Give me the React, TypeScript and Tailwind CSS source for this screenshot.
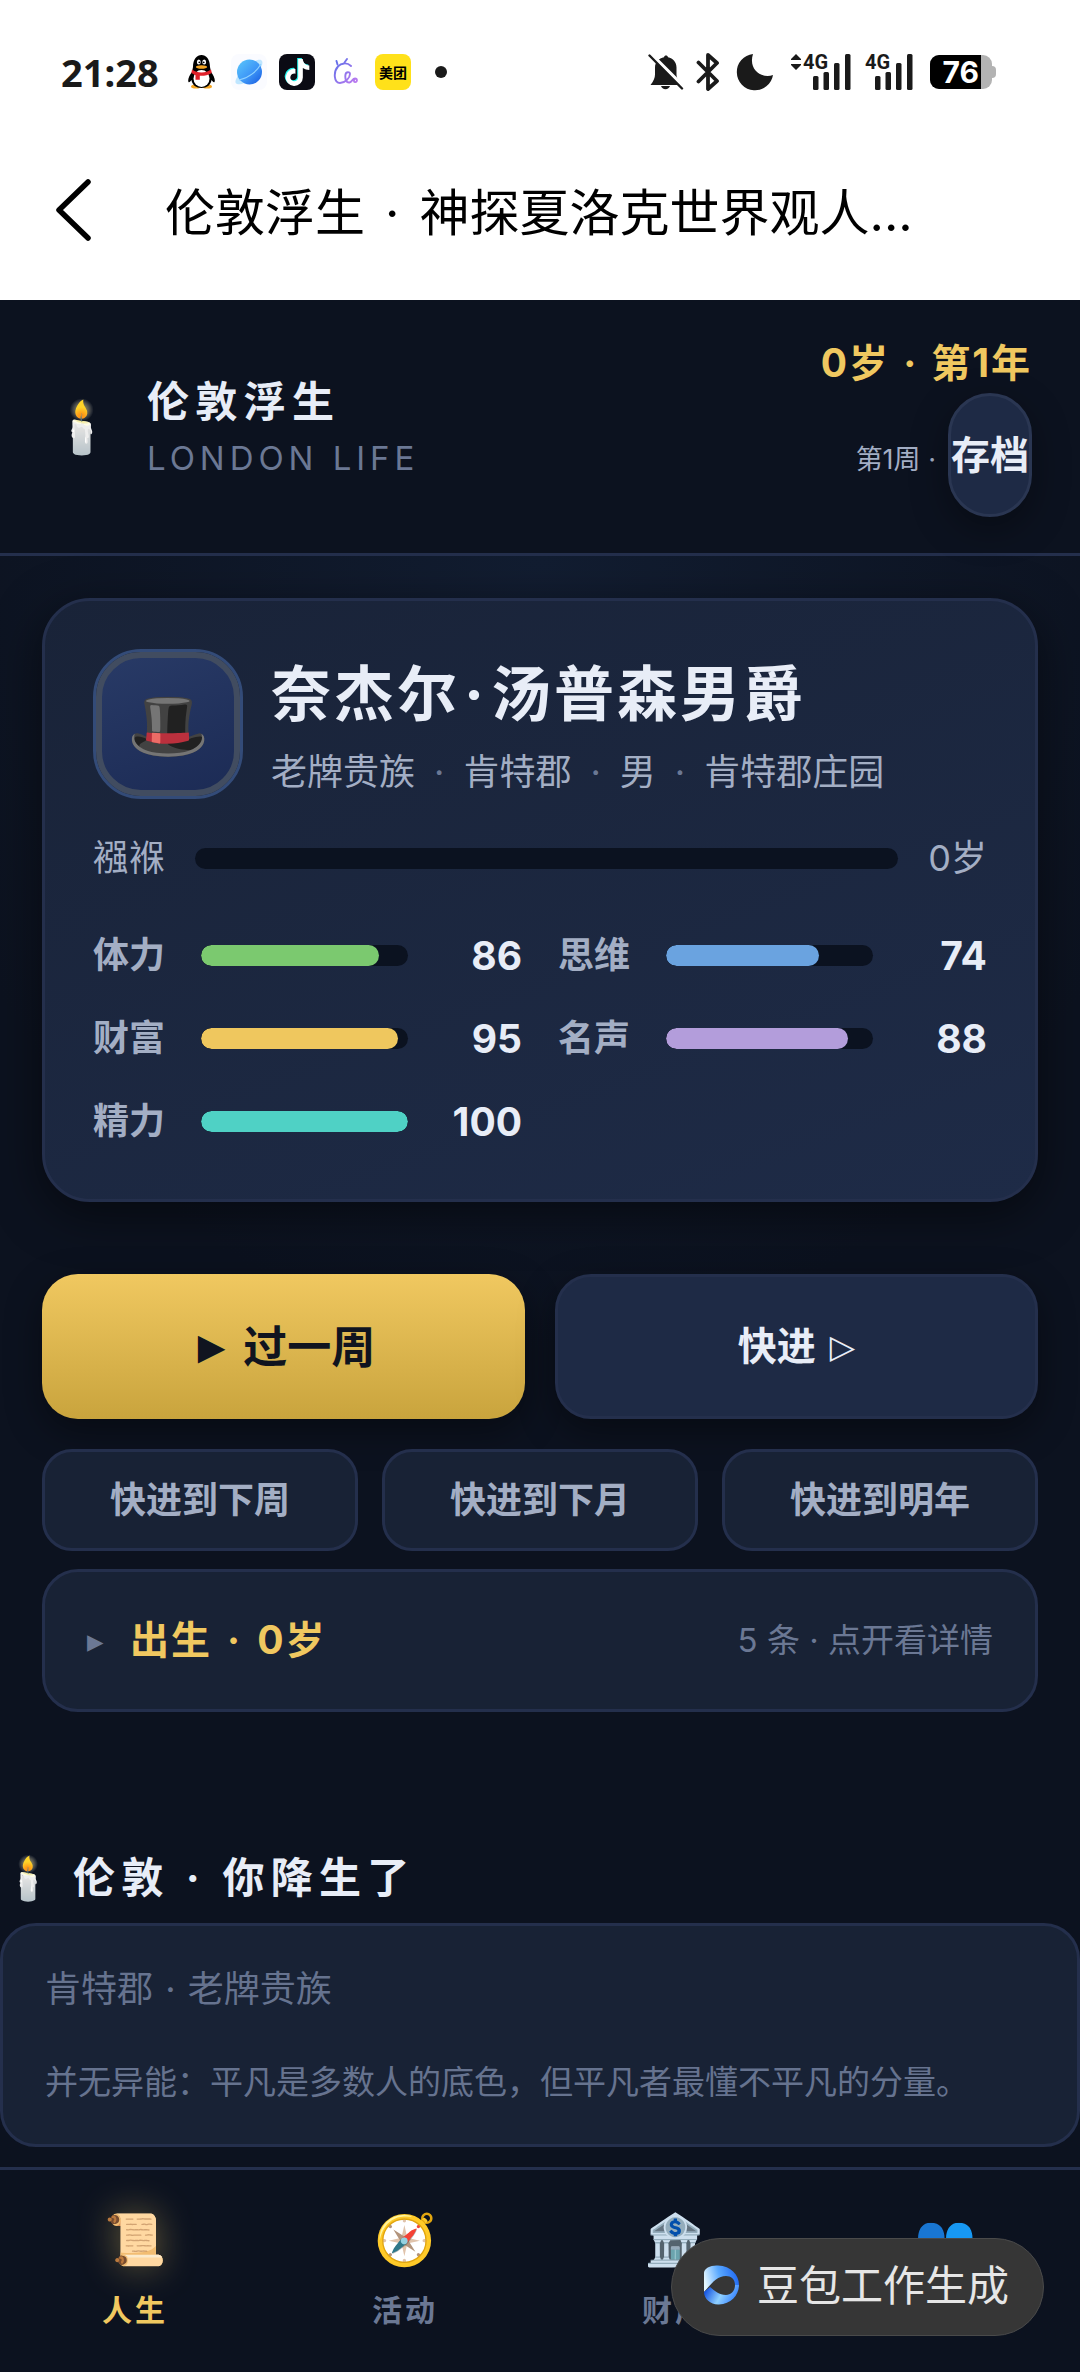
import { FaTiktok } from 'react-icons/fa6';

const stats = [
  { label: '体力', value: 86, color: 'bg-[#7bc96f]' },
  { label: '思维', value: 74, color: 'bg-[#6aa3e0]' },
  { label: '财富', value: 95, color: 'bg-[#efc75e]' },
  { label: '名声', value: 88, color: 'bg-[#b39ddb]' },
  { label: '精力', value: 100, color: 'bg-[#4fd1c5]' },
];

const skips = ['快进到下周', '快进到下月', '快进到明年'];

const tabs = [
  { icon: '📜', label: '人生', active: true },
  { icon: '🧭', label: '活动', active: false },
  { icon: '🏦', label: '财产', active: false },
  { icon: '👥', label: '人脉', active: false },
];

const QQIcon = () => (
  <svg viewBox="0 0 27 34" className="h-[34px] w-[27px]">
    <ellipse cx="8" cy="31.5" rx="5" ry="2" fill="#f5a623" />
    <ellipse cx="19" cy="31.5" rx="5" ry="2" fill="#f5a623" />
    <path d="M5 12C5 4 9 0 13.500 0S22 4 22 12l1 5c3 4 4.500 8 3.500 10-.6 1-2-.5-3-2-.5 5-5 8-10 8s-9.500-3-10-8c-1 1.500-2.400 3-3 2-1-2 .5-6 3.500-10z" fill="#000" />
    <ellipse cx="13.500" cy="23.500" rx="8" ry="8.500" fill="#fff" />
    <path d="M4 14.500c5 4 14 4 19 0l.8 3.500c-4 2.500-8 3-12 2.800v4H7.500v-4.600L3.400 18z" fill="#e0202a" />
    <ellipse cx="10.800" cy="7" rx="1.900" ry="2.600" fill="#fff" />
    <ellipse cx="16.200" cy="7" rx="1.900" ry="2.600" fill="#fff" />
    <circle cx="11.300" cy="7.300" r="0.900" />
    <circle cx="15.700" cy="7.300" r="0.900" />
    <ellipse cx="13.500" cy="12" rx="5.600" ry="1.700" fill="#f5a623" />
  </svg>
);

const PlanetIcon = () => (
  <svg viewBox="0 0 36 36" className="size-9">
    <defs>
      <linearGradient id="planet" x1="0" y1="0" x2="1" y2="1">
        <stop offset="0" stopColor="#5cc8fb" />
        <stop offset="0.550" stopColor="#3e97f7" />
        <stop offset="1" stopColor="#1557e0" />
      </linearGradient>
    </defs>
    <rect width="36" height="36" rx="8" fill="#fafbff" />
    <path d="M6 30c-4-1 0-9 8-16S29 4 31 7s-3 11-10 17-12 7-15 6z" fill="#bfe6ff" />
    <circle cx="18.500" cy="18" r="12.500" fill="url(#planet)" />
    <path d="M8 26C18 24 26 17 30 10" stroke="#8fd2ff" strokeWidth="1.200" fill="none" />
  </svg>
);

const DoodleIcon = () => (
  <svg viewBox="0 0 26 28" className="h-7 w-[26px]" fill="none" strokeWidth="1.900" strokeLinecap="round">
    <defs>
      <linearGradient id="doodle" x1="0" y1="0" x2="1" y2="1">
        <stop offset="0" stopColor="#5a6fe8" />
        <stop offset="1" stopColor="#c07bf0" />
      </linearGradient>
    </defs>
    <path d="M3.500 3l1 3.500M14 1l-2.500 3.500M18 8C14 4 8 5 5 8.500 0 14 1 25 7 25c5 0 10-5 10-9 0-2.500-4-2.500-4.500.5-.8 5 1 8.500 4 8 2.500-.4 3-4 5.500-4 2.600 0 2.400 3.600.4 3.600-1.800 0-1.800-2-.9-2.800" stroke="url(#doodle)" />
  </svg>
);

const BellOffIcon = () => (
  <svg viewBox="0 0 36 36" className="size-9" fill="#1a1a1a">
    <path d="M18 1.500c1 0 1.800.7 2 1.700 5 .9 8.500 5 8.500 10.300v7c0 2.500 1 5 3.500 8l1.500 2.500H2.500C5.500 27 7 24 7 20.500v-7C7 8 11 4 16 3.200c.2-1 1-1.700 2-1.700zM13 32h9c-.6 2-2.300 3.200-4.500 3.200S13.600 34 13 32z" />
    <path d="M3.500 0.500L36 33" stroke="#fff" strokeWidth="3.500" />
    <path d="M1.500 1.500L34 34.500" stroke="#1a1a1a" strokeWidth="2.400" strokeLinecap="round" />
  </svg>
);

const BluetoothIcon = () => (
  <svg viewBox="0 0 24 38" className="h-[38px] w-6" fill="none" stroke="#1a1a1a" strokeWidth="3.800" strokeLinejoin="round" strokeLinecap="round">
    <path d="M2.500 9.500L21 28l-9 8V2l9 8L2.500 28.500" />
  </svg>
);

const MoonIcon = () => (
  <svg viewBox="0 0 38 38" className="size-[38px]">
    <path d="M17 1A18.200 18.200 0 1 0 37 22C26 26 12 17 17 1z" fill="#1a1a1a" />
  </svg>
);

const SignalIcon = ({ arrows }: { arrows?: boolean }) => (
  <span className="flex items-start">
    {arrows && (
      <svg viewBox="0 0 12 16" className="mt-px h-4 w-3" fill="#1a1a1a">
        <path d="M6 0l5 5v1H1V5zM6 16l5-5v-1H1v1z" />
      </svg>
    )}
    <svg viewBox="0 0 50 38" className="h-[38px] w-[50px] overflow-visible" fill="#1a1a1a">
      <text x="1" y="16" fontSize="20" fontWeight="700" fontFamily="Roboto">4G</text>
      <rect x="11" y="23" width="5.500" height="14" rx="1.500" />
      <rect x="21.500" y="19" width="5.500" height="18" rx="1.500" />
      <rect x="32" y="10" width="5.500" height="27" rx="1.500" />
      <rect x="43" y="1" width="5.500" height="36" rx="1.500" />
    </svg>
  </span>
);

const Battery = () => (
  <span className="flex items-center">
    <span className="flex h-[34px] w-[62px] overflow-hidden rounded-[9px] bg-[#b3b3b3]">
      <span className="flex w-[51px] items-center justify-end bg-black pr-[2px] text-[30px] leading-[34px] font-bold text-white">76</span>
    </span>
    <span className="h-3 w-1 rounded-r-sm bg-[#b3b3b3]" />
  </span>
);

const AssistantLogo = () => (
  <svg viewBox="0 0 36 40" className="h-10 w-9">
    <defs>
      <linearGradient id="swirlTop" x1="0" y1="0.500" x2="1" y2="0.300">
        <stop offset="0" stopColor="#e4f7ff" />
        <stop offset="0.450" stopColor="#5aa9ff" />
        <stop offset="1" stopColor="#1c64f2" />
      </linearGradient>
      <linearGradient id="swirlBottom" x1="0" y1="0.300" x2="1" y2="0.600">
        <stop offset="0" stopColor="#0b4be0" />
        <stop offset="0.500" stopColor="#8fd0ff" />
        <stop offset="1" stopColor="#2d7bff" />
      </linearGradient>
    </defs>
    <path d="M1 27V8C1 3 8 0 15 0.500 28 1 36 10 36 20h-4c0-6-4-9-9-9-9 0-15 8-22 16z" fill="url(#swirlTop)" />
    <path d="M1 27l6-5c5 4 9 8 16 8 5 0 9-4 9-10h4c0 10-8 19-20 19.500C8 40 1 34 1 27z" fill="url(#swirlBottom)" />
  </svg>
);

const StatusBar = () => (
  <div className="flex h-[120px] items-start justify-between bg-white pt-[53px] pr-[84px] pl-[61px]">
    <div className="flex h-[38px] items-center">
      <span className="w-[127px] font-['Noto_Sans'] text-[38px] leading-[36px] font-bold text-[#1a1a1a]">21:28</span>
      <QQIcon />
      <span className="ml-4"><PlanetIcon /></span>
      <span className="ml-3 flex size-9 items-center justify-center rounded-lg bg-[#0b0b14] text-white">
        <FaTiktok size={27} className="drop-shadow-[-1px_-1px_0_#25f4ee]" />
      </span>
      <span className="ml-[18px]"><DoodleIcon /></span>
      <span className="ml-4 flex size-9 items-center justify-center rounded-lg bg-[#ffe11a] text-[14px] font-bold text-black">美团</span>
      <span className="ml-6 size-3 rounded-full bg-[#1a1a1a]" />
    </div>
    <div className="flex h-[38px] items-center">
      <BellOffIcon />
      <span className="ml-3"><BluetoothIcon /></span>
      <span className="ml-4"><MoonIcon /></span>
      <span className="ml-4"><SignalIcon arrows /></span>
      <span className="ml-3"><SignalIcon /></span>
      <span className="ml-4"><Battery /></span>
    </div>
  </div>
);

const TitleBar = () => (
  <div className="flex h-[180px] items-center bg-white pr-[84px] pl-[55px]">
    <button type="button" aria-label="返回" className="mr-[74px]">
      <svg viewBox="0 0 36 62" className="h-[62px] w-9" fill="none" stroke="#000" strokeWidth="5.500" strokeLinecap="round" strokeLinejoin="round">
        <path d="M33 3L4 31l29 28" />
      </svg>
    </button>
    <h1 className="truncate pt-1.5 text-[50px] leading-[64px] text-black">
      伦敦浮生<span className="px-1.5"> · </span>神探夏洛克世界观人...
    </h1>
  </div>
);

const GameHeader = () => (
  <header className="flex items-center justify-between border-b-3 border-[#242f4c] bg-[#0c121f] px-12 py-9">
    <div className="flex items-center gap-8">
      <span className="w-[67px] text-center text-[51px] leading-[60px]">🕯️</span>
      <div>
        <div className="text-[42px] leading-[63px] font-bold tracking-[0.15em] text-[#e8edf7]">伦敦浮生</div>
        <div className="text-[33px] leading-[50px] tracking-[0.15em] text-[#6b7894]">LONDON LIFE</div>
      </div>
    </div>
    <div className="text-right">
      <div className="mb-[3px] text-[39px] leading-[54px] font-bold tracking-wider text-[#f0c860]">
        0岁<span className="px-0.5"> · </span>第1年
      </div>
      <div className="flex items-baseline justify-end gap-3 text-[27px] text-[#a3aec4]">
        <span>第1周 ·</span>
        <button type="button" className="h-[124px] rounded-[42px] border-3 border-[#2a3652] bg-[#1e2a45] text-[39px] font-bold text-[#e8edf7] shadow-[0_12px_36px_rgba(0,0,0,0.35)]">存档</button>
      </div>
    </div>
  </header>
);

const ProfileCard = () => (
  <section className="rounded-[48px] border-3 border-[#242f4c] bg-linear-160 from-[#192338] to-[#1e2b47] p-12 shadow-[0_12px_48px_rgba(0,0,0,0.5)]">
    <div className="flex items-start gap-7">
      <div className="size-[150px] shrink-0 rounded-[48px] border-3 border-[#334b78]">
        <div className="flex size-full items-center justify-center rounded-[45px] border-6 border-[#414c60] bg-linear-160 from-[#283a66] to-[#1c2b55] text-[66px] leading-none">🎩</div>
      </div>
      <div className="pt-1.5">
        <h2 className="text-[60px] leading-[78px] font-bold tracking-wider text-[#e8edf7]">
          奈杰尔<span className="px-1">·</span>汤普森男爵
        </h2>
        <p className="mt-3 flex gap-[19px] text-[36px] leading-[54px] text-[#a3aec4]">
          <span>老牌贵族</span>
          <span className="text-[#6b7894]">·</span>
          <span>肯特郡</span>
          <span className="text-[#6b7894]">·</span>
          <span>男</span>
          <span className="text-[#6b7894]">·</span>
          <span>肯特郡庄园</span>
        </p>
      </div>
    </div>
    <div className="mt-8 flex items-center gap-[30px] text-[36px] leading-[54px] text-[#a3aec4]">
      <span>襁褓</span>
      <div className="h-[21px] flex-1 rounded-full bg-[#0b1220]" />
      <span>0岁</span>
    </div>
    <dl className="mt-[41px] grid grid-cols-2 gap-x-9 gap-y-6">
      {stats.map((stat) => (
        <div key={stat.label} className="flex items-center">
          <dt className="w-[108px] text-[36px] leading-[59px] font-semibold text-[#a3aec4]">{stat.label}</dt>
          <div className="h-[21px] flex-1 overflow-hidden rounded-full bg-[#0b1220]">
            <div className={`h-full rounded-full ${stat.color}`} style={{ width: `${stat.value}%` }} />
          </div>
          <dd className="w-[114px] text-right text-[39px] leading-[59px] font-bold text-[#e8edf7]">{stat.value}</dd>
        </div>
      ))}
    </dl>
  </section>
);

const Actions = () => (
  <section className="mt-[72px]">
    <div className="flex gap-[30px] font-bold">
      <button type="button" className="flex h-[145px] flex-1 items-center justify-center gap-[18px] rounded-[36px] bg-linear-to-b from-[#f0c860] to-[#c9a43d] pl-1.5 text-[44px] text-[#10141f] shadow-[0_12px_36px_rgba(0,0,0,0.4)]">
        <span className="font-['DejaVu_Sans'] text-[36px] font-normal">▶</span>
        过一周
      </button>
      <button type="button" className="flex h-[145px] flex-1 items-center justify-center gap-3.5 rounded-[36px] border-3 border-[#242f4c] bg-[#1e2a45] text-[39px] text-[#e8edf7] shadow-[0_12px_36px_rgba(0,0,0,0.4)]">
        快进
        <span className="font-['DejaVu_Sans'] text-[33px]">▷</span>
      </button>
    </div>
    <div className="mt-[30px] grid grid-cols-3 gap-6">
      {skips.map((skip) => (
        <button key={skip} type="button" className="h-[102px] rounded-[30px] border-3 border-[#242f4c] bg-[#182235] text-[36px] font-semibold text-[#a3aec4]">
          {skip}
        </button>
      ))}
    </div>
    <button type="button" className="mt-[18px] flex h-[143px] w-full items-center rounded-[36px] border-3 border-[#242f4c] bg-[#182235] px-[42px]">
      <span className="w-[43px] text-left font-['DejaVu_Sans'] text-[33px] text-[#6b7894]">▸</span>
      <span className="text-[39px] font-bold tracking-wider text-[#f0c860]">
        出生<span className="px-1"> · </span>0岁
      </span>
      <span className="ml-auto text-[33px] text-[#6b7894]">5 条 · 点开看详情</span>
    </button>
  </section>
);

const Story = () => (
  <section className="mt-[134px]">
    <h3 className="flex items-center gap-[18px] text-[42px] leading-[63px] font-bold tracking-[0.15em] text-[#e8edf7]">
      <span className="w-[55px] text-center font-normal tracking-normal">🕯️</span>
      伦敦 · 你降生了
    </h3>
    <div className="mt-[14px] rounded-[36px] border-3 border-[#242f4c] bg-[#182235] px-[42px] py-9 text-[#66738f]">
      <p className="text-[36px] leading-[54px]">
        肯特郡<span className="px-0.5"> · </span>老牌贵族
      </p>
      <p className="mt-10 text-[33px] leading-[52px]">并无异能：平凡是多数人的底色，但平凡者最懂不平凡的分量。</p>
    </div>
  </section>
);

const TabBar = () => (
  <nav className="mt-5 grid grid-cols-4 border-t-3 border-[#242f4c] bg-[#0c121f] pt-9 pb-[38px]">
    {tabs.map((tab) => (
      <button key={tab.label} type="button" className="flex flex-col items-center">
        <span className={`text-[50px] leading-[66px] ${tab.active ? 'drop-shadow-[0_0_18px_rgba(240,200,96,0.4)]' : ''}`}>{tab.icon}</span>
        <span className={`mt-3.5 text-[30px] leading-[48px] font-semibold tracking-widest ${tab.active ? 'text-[#f0c860]' : 'text-[#6b7894]'}`}>{tab.label}</span>
      </button>
    ))}
  </nav>
);

export default function App() {
  return (
    <div lang="zh-CN" className="relative min-h-screen overflow-hidden bg-[#0c121f] font-['Inter','Noto_Sans_CJK_SC',sans-serif]">
      <StatusBar />
      <TitleBar />
      <GameHeader />
      <main className="bg-[radial-gradient(ellipse_60%_50%_at_50%_0%,#121d31,#0c121f)]">
        <div className="px-[42px] pt-[42px]">
          <ProfileCard />
          <Actions />
        </div>
        <Story />
      </main>
      <TabBar />
      <div className="absolute right-9 bottom-9 flex h-[98px] items-center gap-[18px] rounded-full border border-[#4a4a4a] bg-[#363636] pr-[34px] pb-1 pl-[31px] text-[42px] text-[#e6e6e6]">
        <AssistantLogo />
        <span>豆包工作生成</span>
      </div>
    </div>
  );
}
